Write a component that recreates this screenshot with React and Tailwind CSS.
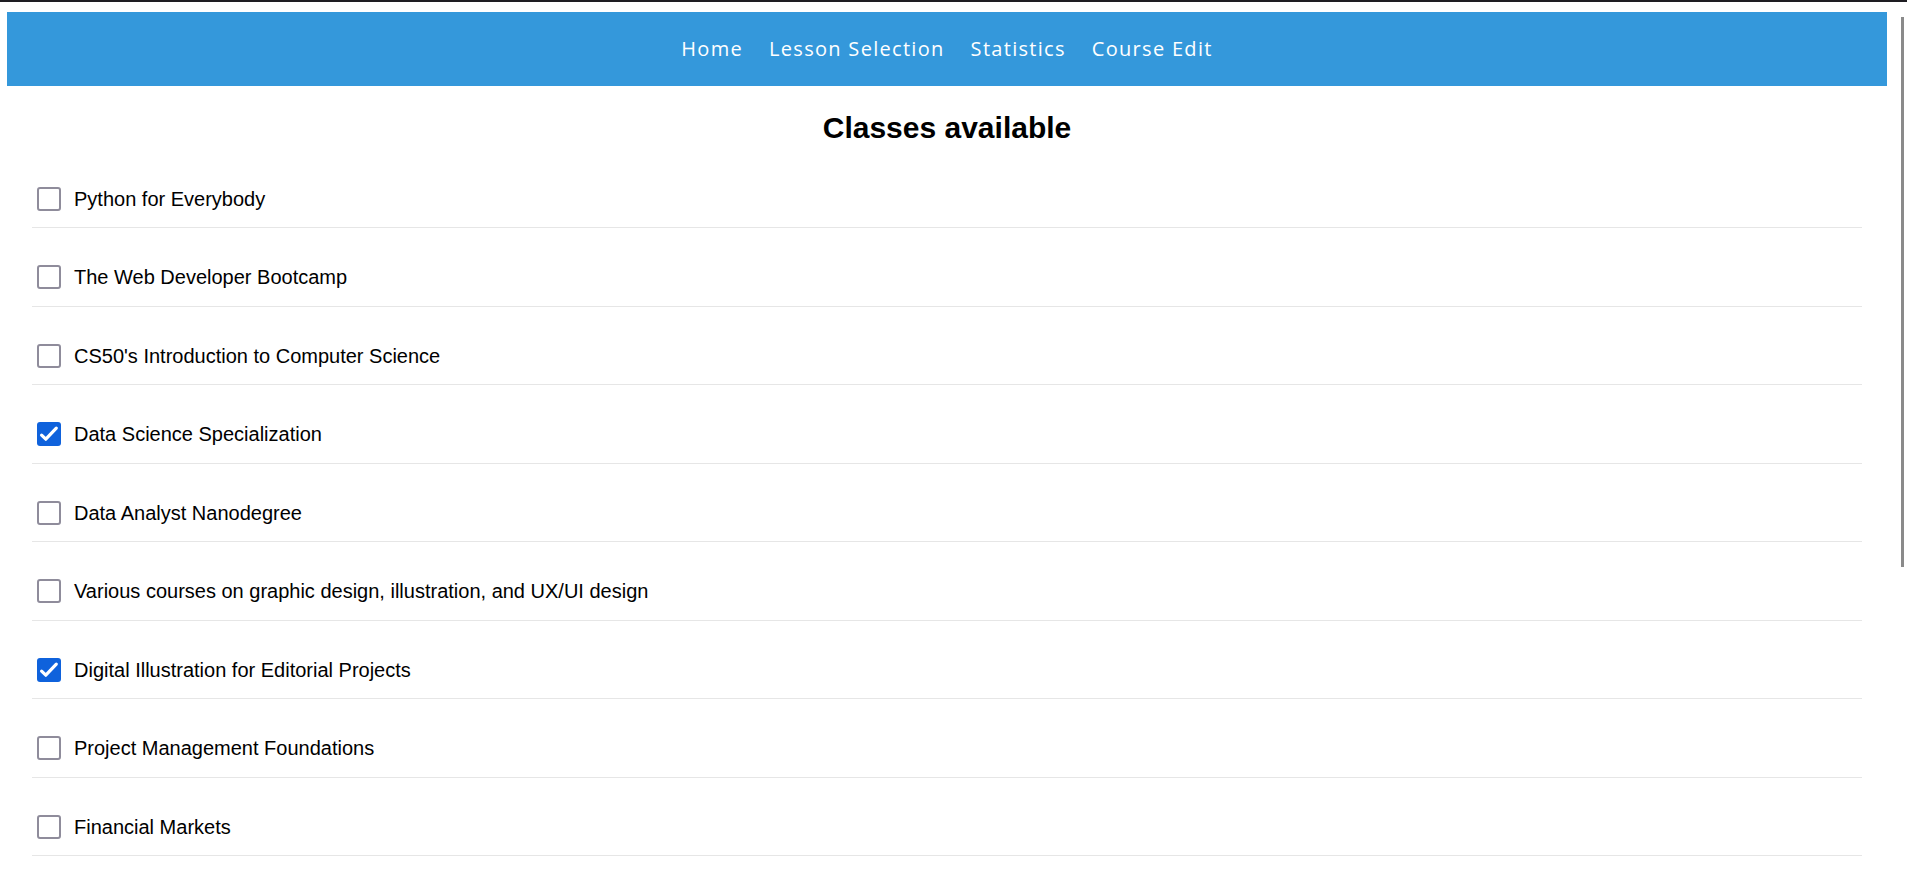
import React from "react";

const courses = [
  { name: "Python for Everybody", checked: false },
  { name: "The Web Developer Bootcamp", checked: false },
  { name: "CS50's Introduction to Computer Science", checked: false },
  { name: "Data Science Specialization", checked: true },
  { name: "Data Analyst Nanodegree", checked: false },
  { name: "Various courses on graphic design, illustration, and UX/UI design", checked: false },
  { name: "Digital Illustration for Editorial Projects", checked: true },
  { name: "Project Management Foundations", checked: false },
  { name: "Financial Markets", checked: false },
];

function Box({ checked }) {
  if (checked) {
    return (
      <span className="flex h-6 w-6 shrink-0 items-center justify-center rounded-[3px] bg-[#0f62dc]">
        <svg width="24" height="24" viewBox="0 0 24 24" fill="none">
          <path d="M4.6 13.2 L8.8 17.2 L19.3 6.2" stroke="#ffffff" strokeWidth="3.2" strokeLinecap="round" strokeLinejoin="round" />
        </svg>
      </span>
    );
  }
  return <span className="block h-6 w-6 shrink-0 rounded-[3px] border-2 border-[#8f8c9b] bg-white" />;
}

export default function App() {
  return (
    <div className="relative h-[883px] overflow-hidden bg-white" style={{ fontFamily: '"Liberation Sans", Arial, sans-serif' }}>
      <div className="h-[2px] w-full bg-[#1e1d22]" />
      <nav className="ml-[7px] mr-[20px] mt-[10px] flex h-[74px] items-center justify-center gap-[26px] bg-[#3498db]">
        {["Home", "Lesson Selection", "Statistics", "Course Edit"].map((t) => (
          <a
            key={t}
            href="#"
            className="text-[20px] font-medium tracking-[1.3px] text-white"
            style={{ fontFamily: '"Open Sans", "Noto Sans", sans-serif' }}
          >
            {t}
          </a>
        ))}
      </nav>
      <div className="ml-[7px] mr-[20px]">
        <h2 className="mt-[24.5px] text-center text-[30px] font-bold leading-[34.5px] text-black">Classes available</h2>
        <ul className="mx-[25px] mt-[4.5px]">
          {courses.map((c) => (
            <li key={c.name} className="flex items-center border-b border-[#e6e6e6] pb-[16.5px] pl-[5px] pt-[37px]">
              <label className="flex h-6 items-center gap-[13px]">
                <Box checked={c.checked} />
                <span className="text-[20px] leading-6 text-black">{c.name}</span>
              </label>
            </li>
          ))}
        </ul>
      </div>
      <div className="absolute right-[3px] top-[17px] h-[550px] w-[3px] bg-[#8a8a8a]" />
    </div>
  );
}
